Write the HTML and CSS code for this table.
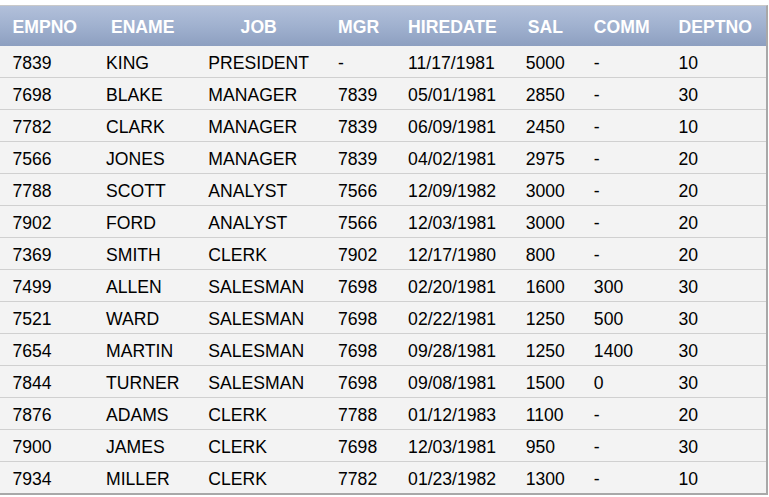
FILE: index.html
```html
<!DOCTYPE html>
<html>
<head>
<meta charset="utf-8">
<link rel="stylesheet" href="styles.css">
</head>
<body>
<div class="wrap">
<table class="emp">
<thead>
<tr><th>EMPNO</th><th>ENAME</th><th>JOB</th><th>MGR</th><th>HIREDATE</th><th>SAL</th><th>COMM</th><th>DEPTNO</th></tr>
</thead>
<tbody>
<tr><td>7839</td><td>KING</td><td>PRESIDENT</td><td>-</td><td>11/17/1981</td><td>5000</td><td>-</td><td>10</td></tr>
<tr><td>7698</td><td>BLAKE</td><td>MANAGER</td><td>7839</td><td>05/01/1981</td><td>2850</td><td>-</td><td>30</td></tr>
<tr><td>7782</td><td>CLARK</td><td>MANAGER</td><td>7839</td><td>06/09/1981</td><td>2450</td><td>-</td><td>10</td></tr>
<tr><td>7566</td><td>JONES</td><td>MANAGER</td><td>7839</td><td>04/02/1981</td><td>2975</td><td>-</td><td>20</td></tr>
<tr><td>7788</td><td>SCOTT</td><td>ANALYST</td><td>7566</td><td>12/09/1982</td><td>3000</td><td>-</td><td>20</td></tr>
<tr><td>7902</td><td>FORD</td><td>ANALYST</td><td>7566</td><td>12/03/1981</td><td>3000</td><td>-</td><td>20</td></tr>
<tr><td>7369</td><td>SMITH</td><td>CLERK</td><td>7902</td><td>12/17/1980</td><td>800</td><td>-</td><td>20</td></tr>
<tr><td>7499</td><td>ALLEN</td><td>SALESMAN</td><td>7698</td><td>02/20/1981</td><td>1600</td><td>300</td><td>30</td></tr>
<tr><td>7521</td><td>WARD</td><td>SALESMAN</td><td>7698</td><td>02/22/1981</td><td>1250</td><td>500</td><td>30</td></tr>
<tr><td>7654</td><td>MARTIN</td><td>SALESMAN</td><td>7698</td><td>09/28/1981</td><td>1250</td><td>1400</td><td>30</td></tr>
<tr><td>7844</td><td>TURNER</td><td>SALESMAN</td><td>7698</td><td>09/08/1981</td><td>1500</td><td>0</td><td>30</td></tr>
<tr><td>7876</td><td>ADAMS</td><td>CLERK</td><td>7788</td><td>01/12/1983</td><td>1100</td><td>-</td><td>20</td></tr>
<tr><td>7900</td><td>JAMES</td><td>CLERK</td><td>7698</td><td>12/03/1981</td><td>950</td><td>-</td><td>30</td></tr>
<tr><td>7934</td><td>MILLER</td><td>CLERK</td><td>7782</td><td>01/23/1982</td><td>1300</td><td>-</td><td>10</td></tr>
</tbody>
</table>
</div>
</body>
</html>
```

FILE: styles.css
```css
html, body {
  margin: 0;
  padding: 0;
  background: #ffffff;
}
.wrap {
  padding-top: 5px;
  overflow: hidden;
}
.emp {
  margin-left: -2px;
  border-collapse: separate;
  border-spacing: 0;
  border-top: 1px solid #c9c9c9;
  border-right: 2px solid #a8a8a8;
  border-bottom: 2px solid #a8a8a8;
  background: #f3f3f3;
  font-family: "Liberation Sans", Arial, sans-serif;
  font-size: 17.6px;
  color: #000;
}
.emp th {
  height: 40px;
  padding: 1px 14.5px 0;
  box-sizing: border-box;
  line-height: 20px;
  font-weight: bold;
  color: #fff;
  text-align: center;
  white-space: nowrap;
  background: linear-gradient(to bottom, #b2c0da 0%, #a0b1cf 50%, #8d9fc0 100%);
}
.emp td {
  height: 32px;
  box-sizing: border-box;
  padding: 2px 14.5px 0;
  line-height: 20px;
  text-align: left;
  white-space: nowrap;
  border-bottom: 1px solid #d0d0d0;
}
.emp tbody tr:last-child td {
  border-bottom: none;
  height: 31px;
}
```
